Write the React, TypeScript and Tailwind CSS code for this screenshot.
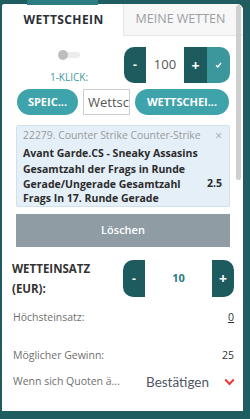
import React from "react";

export default function App() {
  return (
    <div
      className="relative w-[250px] h-[419px] bg-[#1f5d61] pt-[4px] pl-[2px] overflow-hidden"
      style={{ fontFamily: '"Open Sans", "Noto Sans", sans-serif' }}
    >
      <div className="absolute left-[27px] top-0 w-[71px] h-[5px] bg-[#2c7d82] z-10" />
      <div className="relative w-[241px] h-[407px] bg-white rounded-tr-[6px] rounded-tl-[2px]">
        {/* scrollbar */}
        <div className="absolute right-[2px] top-[1px] w-[5px] h-[175px] rounded-full bg-[#cfcfcf] z-10" />
        {/* tabs */}
        <div className="flex h-[32px]">
          <div className="w-[121px] flex items-center justify-center text-[12px] font-bold tracking-[0.4px] text-[#2b2f36] pl-[2px]">
            WETTSCHEIN
          </div>
          <div className="flex-1 flex items-center justify-center bg-[#f7f7f7] border-l border-b border-[#e6e6e6] rounded-tr-[6px] text-[12.5px] text-[#9a9ea3] pr-[6px]">
            MEINE WETTEN
          </div>
        </div>
        {/* row 2 */}
        <div className="mt-[11px] flex h-[36px]">
          <div className="ml-[14px] w-[106px] flex flex-col items-center">
            <div className="relative mt-[3px] w-[22px] h-[10px] flex items-center">
              <div className="absolute left-[2px] right-0 h-[6px] rounded-full bg-[#ececec]" />
              <div className="relative w-[10px] h-[10px] rounded-full bg-[#bdbdbd]" />
            </div>
            <div className="mt-[11px] text-[10px] leading-[12px] text-[#3d9aa1]">1-KLICK:</div>
          </div>
          <div className="ml-[2px] w-[106px] h-[36px] rounded-[10px] overflow-hidden flex">
            <div className="w-[22px] bg-[#1e5b5f] flex items-center justify-center text-white text-[12px] font-bold">-</div>
            <div className="w-[38px] bg-white flex items-center justify-center text-[13px] text-[#555]">100</div>
            <div className="w-[23px] bg-[#1e5b5f] flex items-center justify-center text-white text-[14px] font-bold">+</div>
            <div className="flex-1 bg-[#3c979d] flex items-center justify-center">
              <svg width="7" height="6" viewBox="0 0 7 6">
                <path d="M1 3.2 L2.8 5 L6 1" fill="none" stroke="white" strokeWidth="1.3" />
              </svg>
            </div>
          </div>
        </div>
        {/* row 3 */}
        <div className="mt-[6px] h-[26px] flex ml-[15px]">
          <div className="w-[61px] h-[26px] rounded-full bg-[#3fa3ab] flex items-center justify-center text-white text-[11px] font-bold">
            SPEIC...
          </div>
          <input
            readOnly
            value="Wettschein"
            className="ml-[5px] w-[47px] h-[26px] border border-[#cfcfcf] bg-white pl-[4px] text-[13px] text-[#555] outline-none"
            style={{ fontFamily: '"Open Sans", sans-serif' }}
          />
          <div className="ml-[5px] w-[94px] h-[26px] rounded-full bg-[#3fa3ab] flex items-center justify-center text-white text-[11px] font-bold">
            WETTSCHEI...
          </div>
        </div>
        {/* bet card */}
        <div className="mt-[10px] ml-[14px] w-[214px] h-[82px] bg-[#e5eff8] border border-[#cfe0ee] rounded-[2px] px-[6px] pt-[2px] relative">
          <div className="text-[10.4px] leading-[15px] text-[#9a9a9a] whitespace-nowrap">22279. Counter Strike Counter-Strike</div>
          <div className="absolute right-[7px] top-[2px] text-[12px] leading-[15px] text-[#aaaaaa]">×</div>
          <div className="mt-[2px] text-[10.5px] leading-[17px] font-bold text-[#2b2b2b] whitespace-nowrap">Avant Garde.CS - Sneaky Assasins</div>
          <div className="flex items-center justify-between">
            <div className="text-[10.5px] leading-[14.5px] font-bold text-[#2b2b2b] whitespace-nowrap">
              Gesamtzahl der Frags in Runde
              <br />
              Gerade/Ungerade Gesamtzahl
              <br />
              Frags In 17. Runde Gerade
            </div>
            <div className="text-[10.5px] font-bold text-[#2b2b2b] pr-[1px]">2.5</div>
          </div>
        </div>
        {/* Löschen */}
        <div className="mt-[7px] ml-[14px] w-[214px] h-[33px] bg-[#8f9ca4] flex items-center justify-center text-white text-[11px] font-semibold">
          Löschen
        </div>
        {/* stake row */}
        <div className="mt-[13px] h-[37px] flex items-center">
          <div className="ml-[10px] w-[111px] text-[11.5px] leading-[20px] font-bold text-[#333]">
            WETTEINSATZ
            <br />
            (EUR):
          </div>
          <div className="w-[111px] h-[37px] rounded-[10px] overflow-hidden flex">
            <div className="w-[22px] bg-[#1e5b5f] flex items-center justify-center text-white text-[12px] font-bold">-</div>
            <div className="flex-1 bg-white flex items-center justify-center text-[11px] font-bold text-[#2a7a80]">10</div>
            <div className="w-[22px] bg-[#1e5b5f] flex items-center justify-center text-white text-[14px] font-bold">+</div>
          </div>
        </div>
        {/* Höchsteinsatz */}
        <div className="mt-[13px] h-[16px] flex items-center justify-between ml-[11px] mr-[9px] text-[10.5px] text-[#6f6f6f]">
          <span>Höchsteinsatz:</span>
          <span className="underline text-[#333]">0</span>
        </div>
        <div className="mt-[22px] h-[16px] flex items-center justify-between ml-[11px] mr-[9px] text-[10.5px] text-[#6f6f6f]">
          <span>Möglicher Gewinn:</span>
          <span className="text-[#333]">25</span>
        </div>
        <div className="mt-[8px] h-[20px] flex items-center ml-[11px] text-[10.5px] text-[#6f6f6f]">
          <span className="w-[133px] whitespace-nowrap">Wenn sich Quoten ä...</span>
          <span className="text-[13.5px] text-[#4f5562]" style={{ fontFamily: 'Lato, sans-serif' }}>Bestätigen</span>
          <svg className="ml-[15px]" width="11" height="8" viewBox="0 0 11 8">
            <path d="M1.2 1.5 L5.5 6 L9.8 1.5" fill="none" stroke="#e8393b" strokeWidth="2" />
          </svg>
        </div>
      </div>
    </div>
  );
}
